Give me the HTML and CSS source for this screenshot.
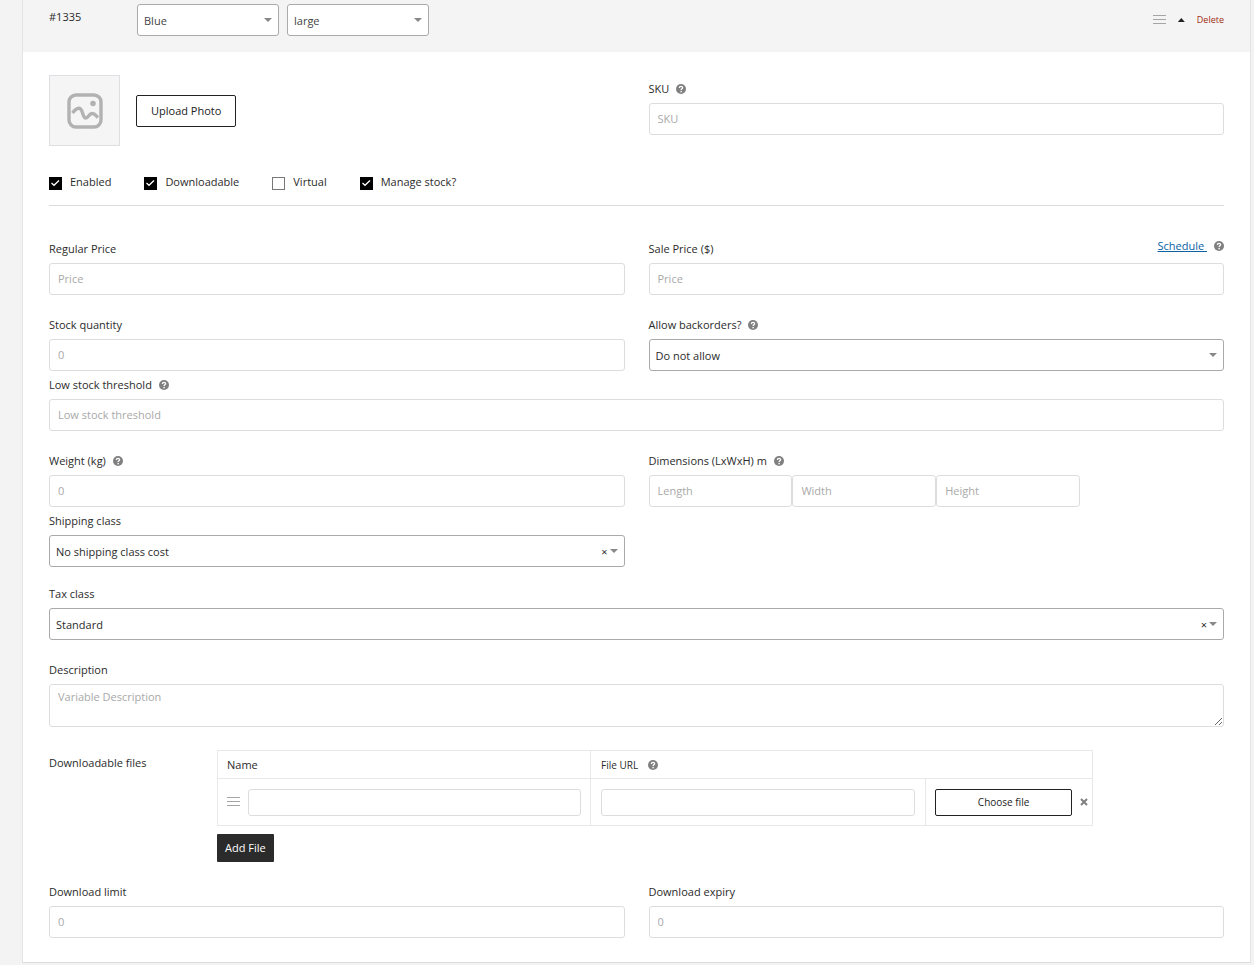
FILE: index.html
```html
<!DOCTYPE html>
<html lang="en">
<head>
  <meta charset="UTF-8">
  <meta name="viewport" content="width=device-width, initial-scale=1.0">
  <title>Product variation</title>
  <link rel="stylesheet" href="styles.css">
</head>
<body>
  <svg class="symbols" aria-hidden="true">
    <symbol id="help" viewBox="0 0 10 10">
      <circle cx="5" cy="5" r="5" fill="#808080"/>
      <path d="M3.4 3.9C3.4 1.7 6.7 1.8 6.6 3.8C6.6 4.9 5.1 4.8 5.1 6.1" fill="none" stroke="#fff" stroke-width="1.3"/>
      <rect x="4.4" y="6.9" width="1.4" height="1.4" fill="#fff"/>
    </symbol>
    <symbol id="bars" viewBox="0 0 13 10">
      <path d="M0 .5H13M0 4.5H13M0 8.5H13" stroke="#a5a5a5"/>
    </symbol>
  </svg>

  <form class="variation">
    <div class="variation-header">
      <strong class="variation-id">#1335</strong>
      <div class="select attribute">
        <select aria-label="Color"><option>Blue</option></select>
      </div>
      <div class="select attribute">
        <select aria-label="Size"><option>large</option></select>
      </div>
      <div class="header-actions">
        <svg class="bars"><use href="#bars"/></svg>
        <button type="button" class="toggle" aria-label="Collapse"></button>
        <a href="#" class="delete">Delete</a>
      </div>
    </div>

    <div class="variation-body">
      <div class="row">
        <div class="photo">
          <div class="photo-preview">
            <svg viewBox="0 0 36 36" fill="none" stroke="#b2b2b2">
              <rect x="2" y="2" width="32" height="32" rx="7" stroke-width="3.4"/>
              <circle cx="26" cy="10.500" r="2.800" fill="#b2b2b2" stroke="none"/>
              <path d="M5.500 20C8 16.500 12 13.500 14 16.500C16 19 16 24.500 18.500 25C21 25.500 22 20.500 25 20.500C28 20.500 29 22.500 31 24.500" stroke-width="3.4"/>
            </svg>
          </div>
          <button type="button" class="btn-outline">Upload Photo</button>
        </div>
        <div class="field field-sku">
          <label for="sku">SKU <svg class="help"><use href="#help"/></svg></label>
          <input type="text" id="sku" placeholder="SKU">
        </div>
      </div>

      <div class="options">
        <label><input type="checkbox" checked>Enabled</label>
        <label><input type="checkbox" checked>Downloadable</label>
        <label><input type="checkbox">Virtual</label>
        <label><input type="checkbox" checked>Manage stock?</label>
      </div>

      <div class="row">
        <div class="field">
          <label for="regularPrice">Regular Price</label>
          <input type="text" id="regularPrice" placeholder="Price">
        </div>
        <div class="field">
          <div class="label-line">
            <label for="salePrice">Sale Price ($)</label>
            <span class="schedule"><a href="#">Schedule&nbsp;</a><svg class="help"><use href="#help"/></svg></span>
          </div>
          <input type="text" id="salePrice" placeholder="Price">
        </div>
      </div>

      <div class="row">
        <div class="field">
          <label for="stock">Stock quantity</label>
          <input type="text" id="stock" placeholder="0">
        </div>
        <div class="field">
          <label for="backorders">Allow backorders? <svg class="help"><use href="#help"/></svg></label>
          <div class="select">
            <select id="backorders"><option>Do not allow</option></select>
          </div>
        </div>
      </div>

      <div class="field close">
        <label for="lowStock">Low stock threshold <svg class="help"><use href="#help"/></svg></label>
        <input type="text" id="lowStock" placeholder="Low stock threshold">
      </div>

      <div class="row">
        <div class="field">
          <label for="weight">Weight (kg) <svg class="help"><use href="#help"/></svg></label>
          <input type="text" id="weight" placeholder="0">
        </div>
        <div class="field">
          <label for="length">Dimensions (LxWxH) m <svg class="help"><use href="#help"/></svg></label>
          <div class="dimensions">
            <input type="text" id="length" placeholder="Length">
            <input type="text" aria-label="Width" placeholder="Width">
            <input type="text" aria-label="Height" placeholder="Height">
          </div>
        </div>
      </div>

      <div class="row close">
        <div class="field">
          <label for="shipping">Shipping class</label>
          <div class="select">
            <select id="shipping"><option>No shipping class cost</option></select>
            <button type="button" class="clear" aria-label="Clear">×</button>
          </div>
        </div>
      </div>

      <div class="field tax">
        <label for="tax">Tax class</label>
        <div class="select">
          <select id="tax"><option>Standard</option></select>
          <button type="button" class="clear" aria-label="Clear">×</button>
        </div>
      </div>

      <div class="field">
        <label for="description">Description</label>
        <textarea id="description" placeholder="Variable Description"></textarea>
      </div>

      <div class="files">
        <span class="files-label">Downloadable files</span>
        <div class="files-content">
          <table>
            <colgroup>
              <col class="col-name">
              <col>
              <col class="col-choose">
            </colgroup>
            <thead>
              <tr>
                <th class="th-name">Name</th>
                <th colspan="2"><span class="th-label">File URL <svg class="help"><use href="#help"/></svg></span></th>
              </tr>
            </thead>
            <tbody>
              <tr>
                <td>
                  <div class="cell">
                    <svg class="bars"><use href="#bars"/></svg>
                    <input type="text" aria-label="File name">
                  </div>
                </td>
                <td><div class="cell"><input type="text" aria-label="File URL"></div></td>
                <td class="choose-cell">
                  <div class="cell">
                    <button type="button" class="btn-outline choose">Choose file</button>
                    <button type="button" class="remove" aria-label="Remove file">
                      <svg viewBox="0 0 8 8"><path d="M1 1L7 7M7 1L1 7" stroke="#808080" stroke-width="2"/></svg>
                    </button>
                  </div>
                </td>
              </tr>
            </tbody>
          </table>
          <button type="button" class="btn-dark">Add File</button>
        </div>
      </div>

      <div class="row">
        <div class="field">
          <label for="limit">Download limit</label>
          <input type="text" id="limit" placeholder="0">
        </div>
        <div class="field">
          <label for="expiry">Download expiry</label>
          <input type="text" id="expiry" placeholder="0">
        </div>
      </div>
    </div>
  </form>
</body>
</html>
```
FILE: styles.css
```css
* {
  box-sizing: border-box;
}

body {
  margin: 0;
  background: #f3f3f3;
  color: #2b2b2b;
  font-family: "Open Sans", sans-serif;
  font-size: 11px;
  line-height: 16px;
}

input, select, textarea, button {
  font: inherit;
  color: inherit;
}

button {
  cursor: pointer;
}

.symbols {
  display: none;
}

.variation {
  margin: 0 3px 0 22px;
  background: #fff;
  border: 1px solid #e4e4e4;
  border-top: none;
  border-bottom-color: #dcdcde;
}

/* Header */
.variation-header {
  display: flex;
  gap: 8px;
  height: 52px;
  padding: 4px 26px 0;
  background: #f4f4f4;
}

.variation-id {
  width: 80px;
  padding-top: 5px;
  font-weight: 500;
}

.attribute {
  width: 142px;
}

.header-actions {
  display: flex;
  align-items: center;
  gap: 12px;
  height: 32px;
  margin-left: auto;
}

.toggle {
  width: 7px;
  height: 4px;
  padding: 0;
  border: none;
  background: #222;
  clip-path: polygon(50% 0, 100% 100%, 0 100%);
}

.delete {
  color: #a02c10;
  font-size: 9px;
  text-decoration: none;
}

.bars {
  flex: none;
  width: 13px;
  height: 10px;
}

.help {
  flex: none;
  width: 10px;
  height: 10px;
}

/* Body */
.variation-body {
  padding: 23px 26px 24px;
}

.row {
  display: grid;
  grid-template-columns: 1fr 1fr;
  gap: 24px;
}

.row + .row,
.row + .field,
.variation-body > .field + .row,
.variation-body > .field + .field,
.files + .row {
  margin-top: 22px;
}

.variation-body > .close {
  margin-top: 6px;
}

.row + .close {
  margin-top: 6px;
}

.row + .tax {
  margin-top: 19px;
}

.field > label,
.label-line {
  display: flex;
  align-items: center;
  gap: 7px;
  height: 16px;
  margin-bottom: 6px;
}

.label-line {
  justify-content: space-between;
}

.schedule {
  display: flex;
  align-items: center;
  gap: 7px;
  padding-bottom: 6px;
}

.schedule a {
  color: #0a62a5;
}

.field-sku {
  padding-top: 6px;
}

input[type="text"],
textarea {
  display: block;
  width: 100%;
  min-width: 0;
  height: 32px;
  padding: 0 8px 2px;
  border: 1px solid #ddd;
  border-radius: 3px;
  background: #fff;
}

textarea {
  height: 43px;
  padding-top: 4px;
  resize: vertical;
}

::placeholder {
  color: #a9a9a9;
  opacity: 1;
}

.select {
  position: relative;
  height: 32px;
}

.select select {
  width: 100%;
  height: 32px;
  padding: 1px 6px 0;
  border: 1px solid #aaa;
  border-radius: 3px;
  background: #fff;
  color: #444;
  appearance: none;
}

.variation-body .select select {
  color: #2b2b2b;
}

.select::after {
  content: "";
  position: absolute;
  top: 14px;
  right: 7px;
  border: solid transparent;
  border-width: 4px 4px 0;
  border-top-color: #888;
  pointer-events: none;
}

.clear {
  position: absolute;
  top: 9px;
  right: 17px;
  padding: 0;
  border: none;
  background: none;
}

.dimensions {
  display: flex;
  width: 75%;
}

/* Photo and checkboxes */
.photo {
  display: flex;
  align-items: center;
  gap: 16px;
}

.photo-preview {
  display: flex;
  align-items: center;
  justify-content: center;
  width: 71px;
  height: 71px;
  border: 1px solid #dfdfe3;
  background: #f5f5f5;
}

.photo-preview svg {
  width: 36px;
  height: 36px;
}

.btn-outline {
  height: 32px;
  padding: 0 14px;
  border: 1px solid #222;
  border-radius: 2px;
  background: #fff;
  color: #222;
  font-weight: 500;
}

.options {
  display: flex;
  gap: 33px;
  margin-bottom: 35px;
  padding: 28px 0 15px;
  border-bottom: 1px solid #dcdcde;
}

.options label {
  display: flex;
  gap: 8px;
}

.options input {
  width: 13px;
  height: 13px;
  margin: 3px 0 0;
  border: 1px solid #777;
  background: #fff;
  appearance: none;
}

.options input:checked {
  border-color: #000;
  background: #000 url("data:image/svg+xml,%3Csvg xmlns='http://www.w3.org/2000/svg' viewBox='0 0 11 11'%3E%3Cpath d='M1.500 5L4 7.300L9 2.500' fill='none' stroke='white' stroke-width='1.300'/%3E%3C/svg%3E");
}

/* Downloadable files */
.files {
  display: flex;
  margin-top: 23px;
}

.files-label {
  width: 168px;
  padding-top: 5px;
}

.files-content {
  flex: 1;
}

table {
  width: 87%;
  table-layout: fixed;
  border-collapse: collapse;
}

th, td {
  padding: 0 10px;
  border: 1px solid #e8e8e8;
  font-weight: 400;
  text-align: left;
}

th {
  height: 28px;
  font-size: 10px;
}

.th-name {
  font-size: 11px;
}

td {
  height: 47px;
}

td:first-child,
th:first-child {
  padding: 0 9px;
}

.col-name {
  width: 373px;
}

.col-choose {
  width: 167px;
}

.th-label,
.cell {
  display: flex;
  align-items: center;
  gap: 8px;
}

.th-label {
  gap: 10px;
}

.cell input[type="text"],
.choose {
  height: 27px;
}

.choose-cell {
  padding: 0 4px 0 9px;
}

.choose {
  flex: 1;
  font-size: 10px;
}

.remove {
  width: 8px;
  height: 8px;
  padding: 0;
  border: none;
  background: none;
}

.remove svg {
  display: block;
}

.btn-dark {
  display: block;
  height: 28px;
  margin-top: 8px;
  padding: 0 8px;
  border: none;
  border-radius: 1px;
  background: #2b2b2b;
  color: #fff;
  font-weight: 500;
}
```
